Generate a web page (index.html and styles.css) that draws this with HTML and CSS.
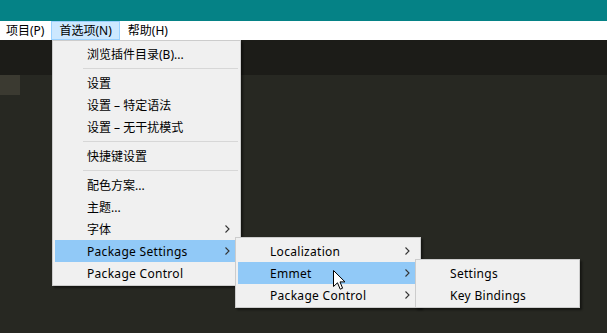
FILE: index.html
```html
<!DOCTYPE html>
<html>
<head>
<meta charset="utf-8">
<link rel="stylesheet" href="styles.css">
</head>
<body>
<div class="app">
  <div class="titlebar"></div>
  <div class="menubar">
    <span class="mb-item first">项目(P)</span>
    <span class="mb-item active">首选项(N)</span>
    <span class="mb-item">帮助(H)</span>
  </div>
  <div class="tabbar"></div>
  <div class="editor">
    <div class="gutter-line"></div>
  </div>

  <div class="menu menu-main">
    <div class="row">浏览插件目录(B)...</div>
    <div class="sep"></div>
    <div class="row">设置</div>
    <div class="row">设置 – 特定语法</div>
    <div class="row">设置 – 无干扰模式</div>
    <div class="sep"></div>
    <div class="row">快捷键设置</div>
    <div class="sep"></div>
    <div class="row">配色方案...</div>
    <div class="row">主题...</div>
    <div class="row has-sub">字体<svg class="chev" width="5" height="8" viewBox="0 0 5 8"><polyline points="0.5,0.5 4,4 0.5,7.5"/></svg></div>
    <div class="row has-sub hl"><span class="lat">Package Settings</span><svg class="chev" width="5" height="8" viewBox="0 0 5 8"><polyline points="0.5,0.5 4,4 0.5,7.5"/></svg></div>
    <div class="row"><span class="lat">Package Control</span></div>
  </div>

  <div class="menu menu-sub">
    <div class="row has-sub"><span class="lat">Localization</span><svg class="chev" width="5" height="8" viewBox="0 0 5 8"><polyline points="0.5,0.5 4,4 0.5,7.5"/></svg></div>
    <div class="row has-sub hl"><span class="lat">Emmet</span><svg class="chev" width="5" height="8" viewBox="0 0 5 8"><polyline points="0.5,0.5 4,4 0.5,7.5"/></svg></div>
    <div class="row has-sub"><span class="lat">Package Control</span><svg class="chev" width="5" height="8" viewBox="0 0 5 8"><polyline points="0.5,0.5 4,4 0.5,7.5"/></svg></div>
  </div>

  <div class="menu menu-sub2">
    <div class="row"><span class="lat">Settings</span></div>
    <div class="row"><span class="lat">Key Bindings</span></div>
  </div>

  <svg class="cursor" width="14" height="21" viewBox="0 0 14 21">
    <path d="M0.5,0.5 L0.5,16.5 L4.5,12.8 L7.2,19.2 L9.6,18.2 L7,11.9 L12,11.9 Z" fill="#fff" stroke="#000" stroke-width="1" stroke-linejoin="miter"/>
  </svg>
</div>
</body>
</html>
```

FILE: styles.css
```css
* { box-sizing: border-box; }
html, body { margin: 0; padding: 0; }
body {
  width: 607px;
  height: 333px;
  overflow: hidden;
  font-family: "Noto Sans", "Noto Sans CJK SC", sans-serif;
  font-size: 12px;
  color: #000;
}
.app {
  position: relative;
  width: 607px;
  height: 333px;
  display: flex;
  flex-direction: column;
  background: #272822;
}
.titlebar {
  height: 21px;
  background: #058286;
  flex: none;
}
.menubar {
  height: 19px;
  background: #fff;
  display: flex;
  align-items: stretch;
  flex: none;
}
.mb-item {
  display: flex;
  align-items: center;
  padding: 0 7px;
  border: 1px solid transparent;
  line-height: 1;
}
.mb-item.first { padding-left: 5px; padding-right: 6px; }
.mb-item.active {
  background: #cce8ff;
  border-color: #99d1ff;
}
.tabbar {
  height: 35px;
  background: #1c1c18;
  flex: none;
}
.editor {
  flex: 1;
  background: #272822;
}
.gutter-line {
  width: 20px;
  height: 20px;
  background: #3b3a31;
}

.menu {
  position: absolute;
  background: #f0f0f0;
  border: 1px solid #cccccc;
  padding: 2px 2px 1px 2px;
  box-shadow: 2px 2px 2px rgba(0, 0, 0, 0.45);
}
.menu-main { left: 52px; top: 40px; width: 189px; }
.menu-sub { left: 235px; top: 237px; width: 186px; }
.menu-sub2 { left: 415px; top: 259px; width: 165px; }

.row {
  position: relative;
  height: 22px;
  display: flex;
  align-items: center;
  padding-left: 32px;
  padding-right: 8px;
  white-space: nowrap;
}
.lat { letter-spacing: 0.3px; }
.row.hl { background: #91c9f7; }
.chev {
  margin-left: auto;
  fill: none;
  stroke: #333;
  stroke-width: 1.1;
}
.sep {
  height: 7px;
  display: flex;
  align-items: center;
  padding-left: 28px;
  padding-right: 0;
}
.sep::before {
  content: "";
  display: block;
  flex: 1;
  height: 1px;
  background: #d7d7d7;
}
.cursor {
  position: absolute;
  left: 333px;
  top: 270px;
}
```
